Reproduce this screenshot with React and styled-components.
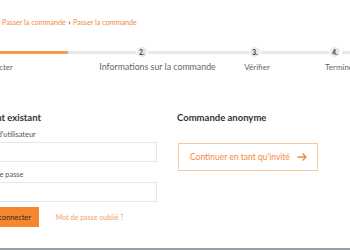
import React from "react";
import styled, { createGlobalStyle } from "styled-components";

const Global = createGlobalStyle`
  html, body { margin: 0; padding: 0; background: #fff; }
  body { overflow: hidden; font-family: Lato, "Noto Sans", sans-serif; }
  * { box-sizing: border-box; }
`;

const Page = styled.div`
  width: 350px;
  height: 250px;
  overflow: hidden;
  display: flex;
  flex-direction: column;
  border-bottom: 2px solid #9a9fa5;
`;

const Breadcrumb = styled.nav`
  margin: 18px 0 0 2px;
  display: flex;
  gap: 2.5px;
  font-size: 7.2px;
  line-height: 10px;
  color: #f08c42;
  white-space: nowrap;
`;

const Sep = styled.span`
  color: #444;
  font-weight: 700;
`;

const Track = styled.div`
  margin-top: 19px;
  height: 10px;
  display: flex;
  align-items: center;
`;

const Line = styled.div`
  height: 3px;
  width: ${(p) => p.$w}px;
  flex: ${(p) => (p.$grow ? "1" : "none")};
  background: ${(p) => (p.$done ? "#f89a4c" : "#e8e8e8")};
`;

const Dot = styled.div`
  width: 10px;
  height: 10px;
  margin: 0 ${(p) => p.$mr || 1}px 0 1px;
  border-radius: 50%;
  background: #e8e8e8;
  color: #333;
  font-size: 6.5px;
  font-weight: 700;
  display: flex;
  align-items: center;
  justify-content: center;
  flex: none;
`;

const LabelRow = styled.div`
  margin-top: 5px;
  height: 10px;
  display: flex;
`;

const StepLabel = styled.div`
  width: 0;
  margin-left: ${(p) => p.$gap}px;
  display: flex;
  justify-content: ${(p) => p.$align || "center"};
  font-size: ${(p) => p.$size || 8}px;
  line-height: 10px;
  color: #666;
  white-space: nowrap;
`;

const Main = styled.div`
  margin: 40px 0 0 -20px;
  display: flex;
  gap: 20px;
`;

const Column = styled.div`
  width: ${(p) => p.$w}px;
  flex: none;
  display: flex;
  flex-direction: column;
`;

const Heading = styled.h2`
  margin: 0 0 6px;
  font-size: 9.5px;
  line-height: 12px;
  font-weight: 700;
  color: #333;
  white-space: nowrap;
`;

const Field = styled.div`
  display: flex;
  flex-direction: column;
  margin-top: ${(p) => p.$mt || 0}px;
`;

const FieldLabel = styled.label`
  font-size: 7.4px;
  line-height: 10px;
  margin-bottom: 2px;
  color: #555;
  white-space: nowrap;
`;

const Input = styled.input`
  height: 20px;
  border: 1px solid #e8e8e8;
  background: #fff;
  outline: none;
  padding: 0 6px;
  font-family: inherit;
`;

const Actions = styled.div`
  margin-top: 5px;
  display: flex;
  align-items: center;
  gap: 17px;
`;

const Primary = styled.button`
  height: 20px;
  padding: 0 8px 0 9px;
  border: none;
  background: #f7862d;
  color: #2a2a2a;
  font-family: inherit;
  font-size: 7.3px;
  white-space: nowrap;
`;

const Link = styled.a`
  font-size: 7.1px;
  color: #f4a060;
  text-decoration: none;
  white-space: nowrap;
`;

const Guest = styled.button`
  margin: 13px 0 0 1px;
  height: 28px;
  width: 140px;
  border: 1px solid #fbc699;
  background: #fff;
  color: #f28a3c;
  font-family: inherit;
  font-size: 8.5px;
  display: flex;
  align-items: center;
  padding: 0 0 0 11px;
  gap: 7px;
  white-space: nowrap;
`;

const Arrow = () => (
  <svg width="10" height="8" viewBox="0 0 10 8" fill="none" stroke="#f28a3c" strokeWidth="1.4" strokeLinecap="round" strokeLinejoin="round">
    <path d="M1 4h8M6 1l3 3-3 3" />
  </svg>
);

export default function App() {
  return (
    <>
      <Global />
      <Page>
        <Breadcrumb>
          <span>Passer la commande</span>
          <Sep>›</Sep>
          <span>Passer la commande</span>
        </Breadcrumb>
        <Track>
          <Line $w={68} $done />
          <Line $w={68} />
          <Dot>2.</Dot>
          <Line $w={101} />
          <Dot>3.</Dot>
          <Line $w={68} />
          <Dot $mr={2}>4.</Dot>
          <Line $grow />
        </Track>
        <LabelRow>
          <StepLabel $gap={13} $align="flex-end">Se connecter</StepLabel>
          <StepLabel $gap={144.5} $size={8.8}>Informations sur la commande</StepLabel>
          <StepLabel $gap={99.5}>Vérifier</StepLabel>
          <StepLabel $gap={68} $align="flex-start">Terminé</StepLabel>
        </LabelRow>
        <Main>
          <Column $w={177}>
            <Heading>Client existant</Heading>
            <Field>
              <FieldLabel>Nom d'utilisateur</FieldLabel>
              <Input />
            </Field>
            <Field $mt={8}>
              <FieldLabel>Mot de passe</FieldLabel>
              <Input type="password" />
            </Field>
            <Actions>
              <Primary>Se connecter</Primary>
              <Link href="#">Mot de passe oublié ?</Link>
            </Actions>
          </Column>
          <Column $w={150}>
            <Heading>Commande anonyme</Heading>
            <Guest>
              Continuer en tant qu'invité
              <Arrow />
            </Guest>
          </Column>
        </Main>
      </Page>
    </>
  );
}
